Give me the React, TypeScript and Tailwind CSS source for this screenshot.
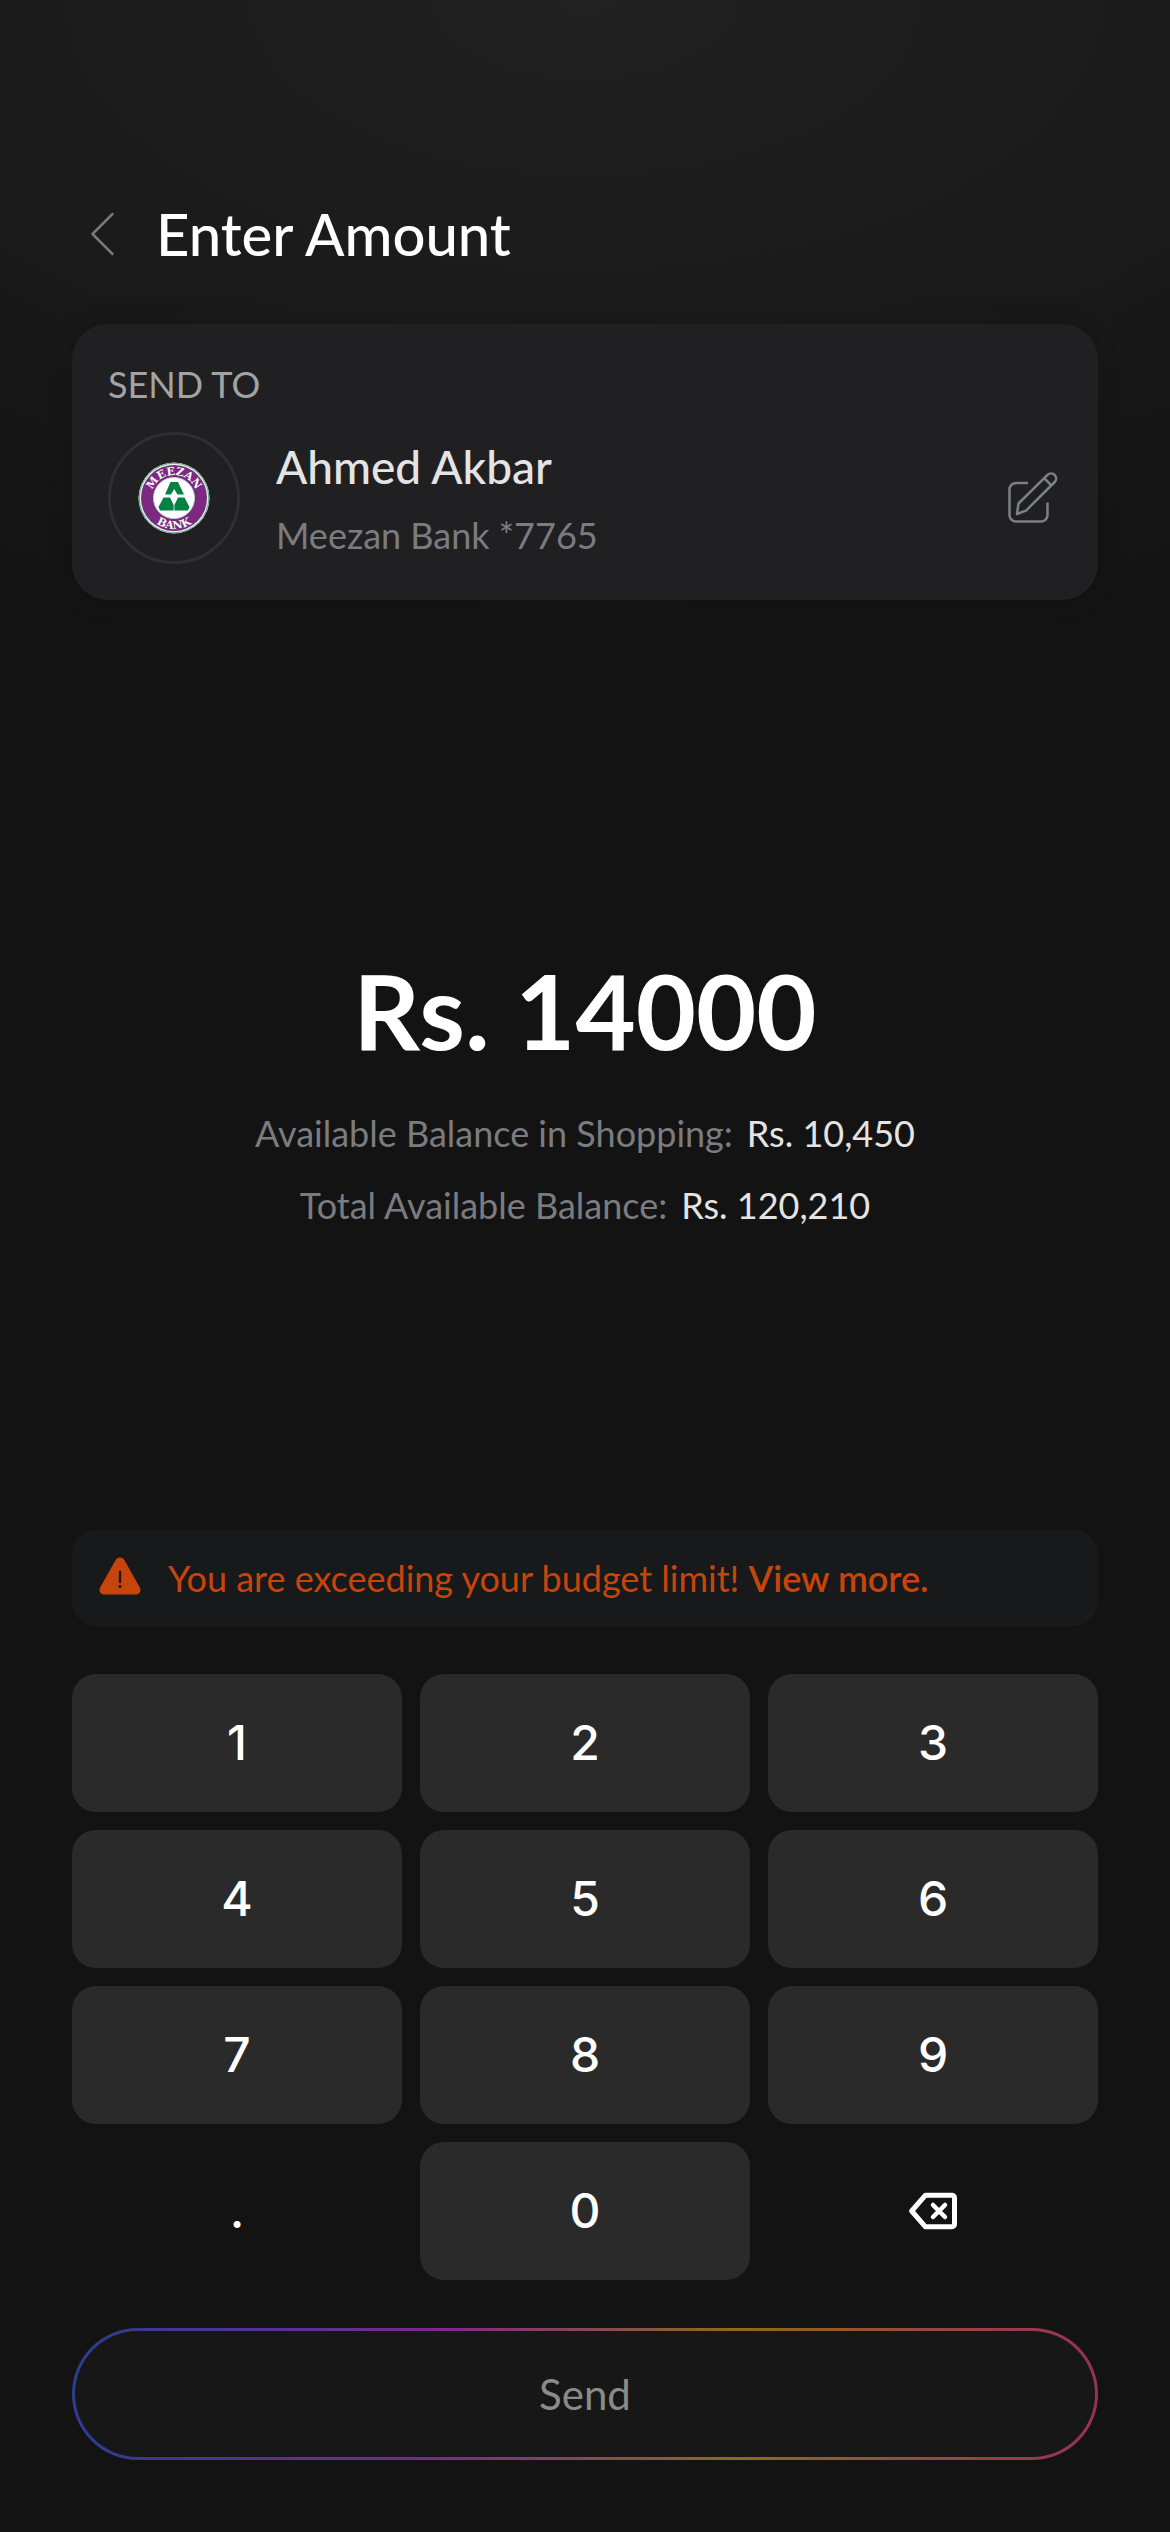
import React, { useState } from "react";

const digits = ["1", "2", "3", "4", "5", "6", "7", "8", "9"];

const ChevronIcon = () => (
  <svg viewBox="0 0 60 60" className="size-15" fill="none" stroke="#77787b" strokeWidth="2.500" strokeLinecap="round" strokeLinejoin="round">
    <path d="M40.500 10 20.500 30l20 20" />
  </svg>
);

const EditIcon = () => (
  <svg viewBox="0 0 54 54" className="size-[54px]" fill="none" stroke="#7f8084" strokeWidth="2.500" strokeLinecap="butt" strokeLinejoin="round">
    <path d="M20 12H8a6.500 6.500 0 0 0-6.500 6.500V44A6.500 6.500 0 0 0 8 50.500h25a6.500 6.500 0 0 0 6.500-6.500V31.500" />
    <path d="M9 43l1.500-10.500L39.500 3.800c2-1.900 5.100-1.900 7.100.1 2 2 2 5.100.1 7.100L18 39.600 9 43Z" />
    <path d="M36.200 7.200l7.100 7.100" />
  </svg>
);

const WarningIcon = () => (
  <svg viewBox="0 0 48 48" className="size-12 shrink-0" aria-hidden="true">
    <path d="M19.800 5.800c1.900-3.100 6.500-3.100 8.400 0l15.600 27.600c1.900 3.300-.4 7.100-4.200 7.100H8.400c-3.800 0-6.100-3.800-4.200-7.100L19.800 5.800Z" fill="#c8440d" />
    <path d="M24 18v10" stroke="#17191a" strokeWidth="2.400" strokeLinecap="round" />
    <circle cx="24" cy="32.500" r="1.600" fill="#17191a" />
  </svg>
);

const BackspaceIcon = () => (
  <svg viewBox="0 0 48 38" className="h-[38px] w-12" fill="none" stroke="#fff" strokeWidth="5" strokeLinejoin="round" strokeLinecap="round">
    <path d="M16.500 3.200H43a2.500 2.500 0 0 1 2.500 2.500v26.600a2.500 2.500 0 0 1-2.500 2.500H16.500L2.700 19 16.500 3.200Z" />
    <path d="M24 13l12 12M36 13 24 25" strokeWidth="4.500" />
  </svg>
);

const MeezanLogo = () => (
  <svg viewBox="0 0 72 72" className="size-[72px]" role="img" aria-label="Meezan Bank">
    <defs>
      <path id="arc-top" d="M13 36a23 23 0 0 1 46 0" />
      <path id="arc-bottom" d="M5 36a31 31 0 0 0 62 0" />
    </defs>
    <circle cx="36" cy="36" r="35.500" fill="#e3efe8" />
    <circle cx="36" cy="36" r="34.800" fill="none" stroke="#5fab86" strokeWidth="1" />
    <circle cx="36" cy="36" r="33" fill="#7b2a80" />
    <circle cx="36" cy="36" r="20.500" fill="#fff" stroke="#b9d6d0" strokeWidth="1" />
    <g fill="#fff" fontFamily="DejaVu Serif, serif" fontWeight="700" fontSize="11" textAnchor="middle">
      <text>
        <textPath href="#arc-top" startOffset="50%">MEEZAN</textPath>
      </text>
      <text>
        <textPath href="#arc-bottom" startOffset="50%">BANK</textPath>
      </text>
    </g>
    <g fill="#078046">
      <path d="M32.500 20h7.500l6 12.500h-6.500L36.200 27 33 32.500h-6L32.500 20Z" />
      <path d="M25.500 35.500h6.500l3.600 7.500v5.500H22l-1.500-3.500 5-9.500Z" />
      <path d="M46.500 35.500H40l-3.600 7.500v5.500H50l1.500-3.500-5-9.500Z" />
    </g>
  </svg>
);

type KeyProps = {
  label: string;
  ghost?: boolean;
  onPress: () => void;
  children?: React.ReactNode;
};

const Key = ({ label, ghost, onPress, children }: KeyProps) => (
  <button
    type="button"
    aria-label={label}
    onClick={onPress}
    className={`flex h-[138px] items-center justify-center rounded-3xl font-['Inter',sans-serif] text-5xl font-medium text-white ${ghost ? "" : "bg-[#2a2a2a]"}`}
  >
    {children ?? label}
  </button>
);

const App = () => {
  const [amount, setAmount] = useState("14000");

  const press = (value: string) => setAmount((prev) => prev + value);
  const erase = () => setAmount((prev) => prev.slice(0, -1));

  return (
    <div className="flex min-h-screen flex-col bg-[#131313] bg-[radial-gradient(1300px_680px_at_50%_0px,#212121,#1b1b1b_45%,#131313)] bg-no-repeat px-[72px] pt-[198px] pb-[72px] font-['Lato',sans-serif] text-4xl">
      <header className="mb-[54px] flex h-18 items-center gap-6">
        <button type="button" aria-label="Back">
          <ChevronIcon />
        </button>
        <h1 className="text-[58px]/[72px] font-medium text-white">Enter Amount</h1>
      </header>

      <section className="rounded-[36px] bg-[#202022] p-9 shadow-[0_0_24px_rgba(0,0,0,0.15)]">
        <h2 className="mb-6 text-4xl/[48px] text-[#a2a3a5]">SEND TO</h2>
        <div className="flex items-center gap-9">
          <div className="flex size-[132px] items-center justify-center rounded-full border-3 border-[#2f2f31]">
            <MeezanLogo />
          </div>
          <div className="flex flex-1 flex-col gap-2">
            <p className="text-[46px]/[66px] font-medium text-[#e4e4e4]">Ahmed Akbar</p>
            <p className="text-4xl/[54px] text-[#7b7c80]">Meezan Bank *7765</p>
          </div>
          <button type="button" aria-label="Edit recipient">
            <EditIcon />
          </button>
        </div>
      </section>

      <main className="flex flex-1 flex-col items-center justify-center pt-13">
        <p className="mb-9 text-[104px]/[120px] font-bold text-white">Rs. {amount}</p>
        <dl className="flex flex-col items-center gap-[18px] text-4xl/[54px]">
          <div className="flex gap-[14px]">
            <dt className="text-[#7b7c80]">Available Balance in Shopping:</dt>
            <dd className="text-[#e4e4e4]">Rs. 10,450</dd>
          </div>
          <div className="flex gap-[14px]">
            <dt className="text-[#7b7c80]">Total Available Balance:</dt>
            <dd className="text-[#e4e4e4]">Rs. 120,210</dd>
          </div>
        </dl>
      </main>

      <div role="alert" className="mb-12 flex h-24 items-center gap-6 rounded-3xl bg-[#17191a] px-6 text-[#c8440d]">
        <WarningIcon />
        <p className="text-4xl/[54px]">
          You are exceeding your budget limit!{" "}
          <a href="#budget" className="font-semibold">
            View more.
          </a>
        </p>
      </div>

      <div className="mb-12 grid grid-cols-3 gap-[18px]">
        {digits.map((digit) => (
          <Key key={digit} label={digit} onPress={() => press(digit)} />
        ))}
        <Key label="." ghost onPress={() => press(".")} />
        <Key label="0" onPress={() => press("0")} />
        <Key label="Backspace" ghost onPress={erase}>
          <BackspaceIcon />
        </Key>
      </div>

      <button
        type="button"
        className="flex h-[132px] rounded-full bg-linear-[90deg,#2c3d90,#7b2a8c_36%,#8f6a1e_65%,#963058] p-[3px]"
      >
        <span className="flex flex-1 items-center justify-center self-stretch rounded-full bg-[#161716] text-[42px]/[54px] text-[#8a8b8a]">
          Send
        </span>
      </button>
    </div>
  );
};

export default App;
